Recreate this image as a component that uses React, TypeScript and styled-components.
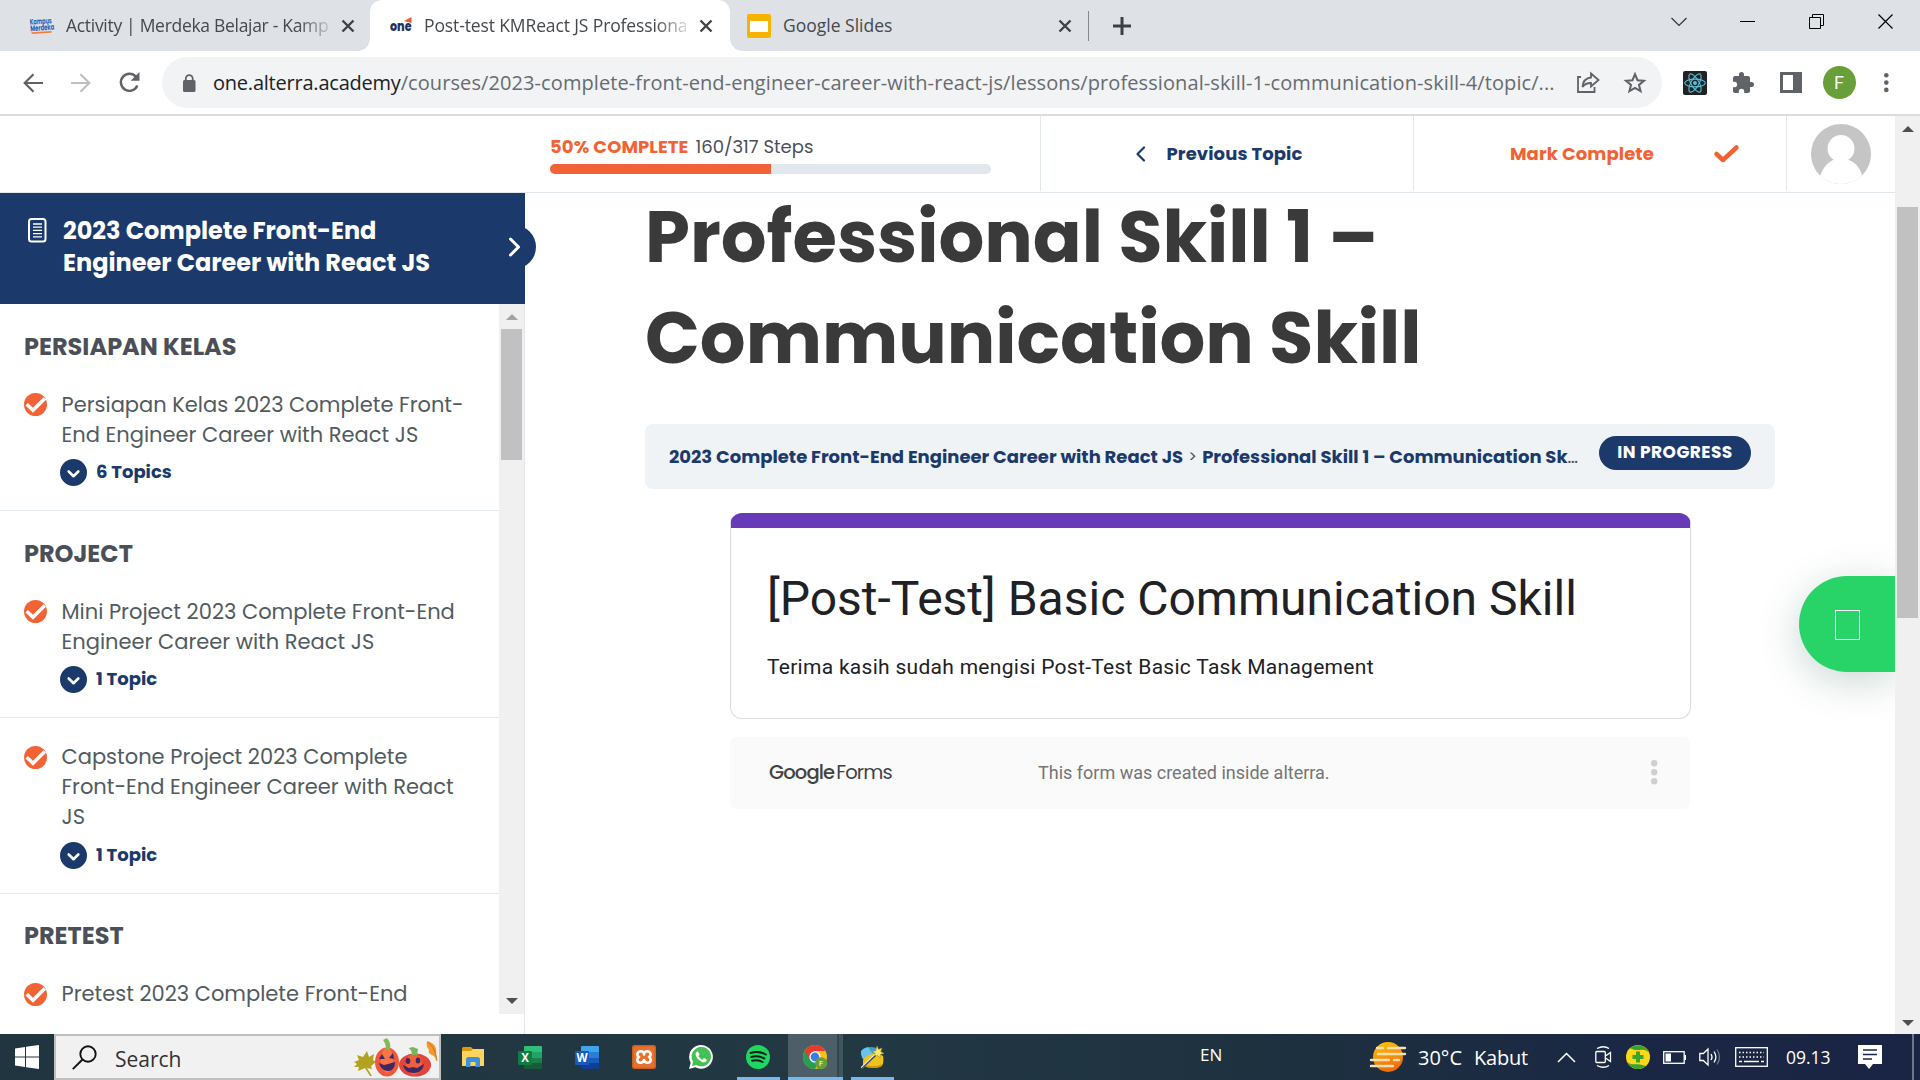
import React from 'react';
import styled, { createGlobalStyle, css } from 'styled-components';

const navy = '#1b3a6b';
const orange = '#f16334';
const line = '#e2e7ed';
const brandFont = `Poppins, Inter, "Open Sans", sans-serif`;
const systemFont = `"Segoe UI", "Open Sans", "Noto Sans", sans-serif`;
const formFont = `Roboto, Arial, sans-serif`;

const GlobalStyle = createGlobalStyle`
  * { box-sizing: border-box; }
  html, body { margin: 0; padding: 0; overflow: hidden; }
  svg { display: block; flex: none; overflow: visible; }
`;

const Screen = styled.div`
  width: 1920px;
  height: 1080px;
  display: flex;
  flex-direction: column;
  overflow: hidden;
  background: #fff;
  font-family: ${brandFont};
  white-space: nowrap;
`;

/* ---------- browser tabs ---------- */
const TabStrip = styled.header`
  height: 51px;
  flex: none;
  display: flex;
  background: #dee1e6;
  font-family: ${systemFont};
  font-size: 17.5px;
  color: #45494d;
`;

const Tab = styled.div<{ $width: number; $padLeft: number; $padRight: number; $active?: boolean }>`
  width: ${p => p.$width}px;
  padding: 0 ${p => p.$padRight}px 0 ${p => p.$padLeft}px;
  display: flex;
  align-items: center;
  ${p => p.$active && css`
    position: relative;
    background: #fff;
    border-radius: 12px 12px 0 0;
    &::before, &::after {
      content: '';
      position: absolute;
      bottom: 0;
      width: 12px;
      height: 12px;
    }
    &::before { left: -12px; background: radial-gradient(circle at 0 0, #dee1e6 11.5px, #fff 12px); }
    &::after { right: -12px; background: radial-gradient(circle at 100% 0, #dee1e6 11.5px, #fff 12px); }
  `}
`;

const TabTitle = styled.span<{ $gap: number; $track: number; $fade?: boolean }>`
  flex: 1;
  min-width: 0;
  margin: 0 11px 0 ${p => p.$gap}px;
  letter-spacing: ${p => p.$track}px;
  line-height: 51px;
  ${p => p.$fade && css`mask-image: linear-gradient(90deg, #000 88%, rgba(0, 0, 0, 0.15) 100%);`}
`;

const TabDivider = styled.i`
  width: 1px;
  height: 30px;
  margin-top: 11px;
  background: #85888c;
`;

const NewTab = styled.div`
  width: 66px;
  display: flex;
  justify-content: center;
  align-items: center;
`;

const WindowButtons = styled.div`
  margin-left: auto;
  display: flex;
  height: 43px;
  align-items: center;
`;

const WindowButton = styled.div`
  width: 69px;
  display: flex;
  justify-content: center;
`;

/* ---------- address row ---------- */
const Toolbar = styled.div`
  height: 65px;
  flex: none;
  display: flex;
  align-items: center;
  padding: 0 0 0 9px;
  border-bottom: 2px solid #dadce0;
`;

const ToolButton = styled.div<{ $width: number }>`
  width: ${p => p.$width}px;
  flex: none;
  display: flex;
  justify-content: center;
`;

const AddressBar = styled.div`
  width: 1500px;
  height: 51px;
  margin: 0 20px 0 9px;
  flex: none;
  display: flex;
  align-items: center;
  padding-left: 21px;
  border-radius: 26px;
  background: #f1f3f4;
`;

const Url = styled.div`
  width: 1351px;
  margin-left: 17px;
  font: 20px/51px ${systemFont};
  letter-spacing: 0.09px;
  color: #676b70;
`;

const UrlHost = styled.span`
  color: #202124;
  letter-spacing: -0.22px;
`;

const ProfileBadge = styled.div`
  width: 33px;
  height: 33px;
  border-radius: 50%;
  background: #689f38;
  color: #fff;
  font: 18px/33px ${formFont};
  text-align: center;
`;

/* ---------- page ---------- */
const Viewport = styled.div`
  height: 918px;
  flex: none;
  display: flex;
`;

const Page = styled.div`
  width: 1895px;
  display: flex;
  flex-direction: column;
  overflow: hidden;
  position: relative;
`;

const CourseHeader = styled.div`
  height: 77px;
  flex: none;
  display: flex;
  padding: 0 0 1px 525px;
  border-bottom: 1px solid ${line};
  background: #fff;
  position: relative;
  z-index: 1;
`;

const HeaderCell = styled.div<{ $width: number; $left?: number; $border?: boolean }>`
  width: ${p => p.$width}px;
  padding-left: ${p => p.$left || 0}px;
  display: flex;
  align-items: center;
  border-left: ${p => (p.$border ? `1px solid ${line}` : '0')};
`;

const Progress = styled.div`
  width: 441px;
`;

const ProgressText = styled.div`
  display: flex;
  gap: 7px;
  line-height: 28px;
  font-size: 18px;
  color: #4a4f57;
`;

const ProgressPercent = styled.b`
  font-weight: 700;
  letter-spacing: 0.1px;
  color: ${orange};
`;

const ProgressTrack = styled.div`
  height: 10px;
  margin-top: 3px;
  border-radius: 5px;
  overflow: hidden;
  background: #e2e7ed;
`;

const ProgressFill = styled.div`
  width: 50%;
  height: 100%;
  background: ${orange};
`;

const HeaderLink = styled.span<{ $tone: string; $left?: number; $right?: number }>`
  margin: 0 ${p => p.$right || 0}px 0 ${p => p.$left || 0}px;
  font-size: 18px;
  font-weight: 700;
  letter-spacing: 0.1px;
  color: ${p => p.$tone};
`;

const Body = styled.div`
  flex: 1;
  min-height: 0;
  display: flex;
`;

/* ---------- course sidebar ---------- */
const Sidebar = styled.aside`
  width: 525px;
  flex: none;
  border-right: 1px solid ${line};
`;

const CourseTitleBox = styled.div`
  width: 525px;
  height: 111px;
  padding: 22px 0 0 28px;
  display: flex;
  gap: 16px;
  background: ${navy};
  position: relative;
`;

const CourseTitle = styled.h3`
  margin: 0;
  font-size: 24px;
  line-height: 32px;
  font-weight: 700;
  color: #fff;
`;

const CourseIcon = styled.div`
  padding-top: 3px;
`;

const CollapseKnob = styled.div`
  position: absolute;
  right: -11px;
  top: 32px;
  width: 44px;
  height: 44px;
  border-radius: 50%;
  display: flex;
  align-items: center;
  justify-content: center;
  background: ${navy};
`;

const Outline = styled.div`
  display: flex;
  height: 710px;
  overflow: hidden;
`;

const OutlineList = styled.div`
  width: 499px;
`;

const OutlineHeading = styled.h4`
  margin: 0;
  padding: 27.5px 0 0 24px;
  font-size: 24px;
  line-height: 30px;
  font-weight: 700;
  color: #4b4f57;
`;

const Lesson = styled.div<{ $top: number; $last?: boolean }>`
  padding: ${p => p.$top}px 0 ${p => (p.$last ? 0 : 24)}px 24px;
  border-bottom: ${p => (p.$last ? '0' : `1px solid ${line}`)};
  display: flex;
  gap: 14.5px;
`;

const LessonMark = styled.div`
  padding-top: 3.5px;
`;

const LessonText = styled.div`
  font-size: 21px;
  line-height: 30px;
  color: #515b5f;
  font-weight: 400;
`;

const Topics = styled.div`
  display: flex;
  align-items: center;
  gap: 9px;
  height: 27px;
  margin: 9.5px 0 0 -1.5px;
  font-size: 18px;
  font-weight: 700;
  color: ${navy};
`;

const TopicsLabel = styled.span`
  padding-bottom: 1px;
`;

const ScrollTrack = styled.div`
  width: 25px;
  flex: none;
  display: flex;
  flex-direction: column;
  align-items: center;
  background: #f0f0f0;
`;

const ScrollArrow = styled.i<{ $down?: boolean; $muted?: boolean; $gap: number }>`
  width: 0;
  height: 0;
  border: 6px solid transparent;
  ${p => {
    const c = p.$muted ? '#a3a3a3' : '#505050';
    return p.$down
      ? css`border-top-color: ${c}; border-bottom-width: 0; margin: auto 0 ${p.$gap}px;`
      : css`border-bottom-color: ${c}; border-top-width: 0; margin: ${p.$gap}px 0 0;`;
  }}
`;

const ScrollThumb = styled.i<{ $gap: number; $height: number }>`
  width: 21px;
  height: ${p => p.$height}px;
  margin: ${p => p.$gap}px 1px 0 0;
  background: #c1c1c1;
`;

/* ---------- lesson content ---------- */
const Content = styled.main`
  width: 1130px;
  margin: -7px 0 0 120px;
`;

const LessonTitle = styled.h1`
  margin: 0;
  font-size: 72px;
  line-height: 101px;
  font-weight: 700;
  color: #3a3a3a;
`;

const Breadcrumb = styled.nav`
  height: 65px;
  margin-top: 36px;
  padding: 0 24px;
  display: flex;
  align-items: center;
  border-radius: 8px;
  background: #eff3f6;
  font-size: 18px;
  color: #4b4f57;
`;

const Crumb = styled.b`
  font-weight: 700;
  color: ${navy};
`;

const CrumbSeparator = styled.span`
  width: 19px;
  text-align: center;
  font-size: 16px;
`;

const StatusPill = styled.span`
  width: 152px;
  height: 34px;
  flex: none;
  margin: 0 0 7px auto;
  border-radius: 17px;
  background: ${navy};
  color: #fff;
  font-size: 17px;
  font-weight: 700;
  letter-spacing: 0.45px;
  line-height: 33px;
  text-align: center;
`;

const FormCard = styled.section`
  width: 961px;
  height: 206px;
  margin: 24px 0 0 84.6px;
  border: 1px solid #dadce0;
  border-top: 15px solid #673ab7;
  border-radius: 12px;
  padding: 40px 0 0 36.4px;
  font-family: ${formFont};
  color: #202124;
`;

const FormTitle = styled.h2`
  margin: 0;
  font-size: 48px;
  line-height: 61px;
  font-weight: 400;
`;

const FormText = styled.p`
  margin: 22.5px 0 0;
  font-size: 21px;
  line-height: 30px;
  letter-spacing: 0.29px;
`;

const FormFooter = styled.div`
  width: 960px;
  height: 72px;
  margin: 18px 0 0 85px;
  padding: 0 33px 2px 39px;
  display: flex;
  align-items: center;
  border-radius: 6px;
  background: #fafafa;
  font: 18px ${formFont};
  color: #757575;
`;

const FormsLogo = styled.div`
  width: 269px;
  padding-top: 1px;
  font: 19.5px ${brandFont};
  letter-spacing: -0.85px;
  color: #424242;
`;

const LogoBold = styled.b`
  font-weight: 500;
  margin-right: 2px;
`;

const FooterMenu = styled.div`
  margin-left: auto;
`;

const ChatButton = styled.div`
  position: absolute;
  right: 0;
  top: 460px;
  width: 96px;
  height: 96px;
  border-radius: 48px 0 0 48px;
  background: #28d468;
  box-shadow: 0 9px 40px rgba(7, 74, 57, 0.22);
  display: flex;
  align-items: center;
  justify-content: center;
  padding-top: 2px;
`;

const MissingGlyph = styled.i`
  width: 25px;
  height: 30px;
  border: 1.5px solid #fff;
`;

/* ---------- taskbar ---------- */
const Taskbar = styled.footer`
  height: 46px;
  flex: none;
  display: flex;
  background: linear-gradient(90deg, #20353f 0%, #223843 45%, #1d303f 68%, #1a2744 86%, #1a2444 100%);
  font-family: ${systemFont};
  color: #fff;
`;

const StartButton = styled.div`
  width: 54px;
  display: flex;
  align-items: center;
  justify-content: center;
`;

const SearchBox = styled.div`
  width: 387px;
  border: 2px solid #bfbfbf;
  background: #f1f1f1;
  display: flex;
  align-items: center;
  padding-left: 16px;
`;

const SearchLabel = styled.span`
  margin: 3px 0 0 18px;
  width: 239px;
  font-size: 21px;
  line-height: 38px;
  color: #2f3133;
`;

const AppButton = styled.div<{ $running?: boolean; $focused?: boolean }>`
  width: 57px;
  height: 46px;
  display: flex;
  align-items: center;
  justify-content: center;
  position: relative;
  ${p => p.$focused && css`
    background: linear-gradient(90deg, transparent 1px, #4c5f69 1px, #4c5f69 50px, #32464f 50px, #32464f 52px, #42555f 52px, #42555f 56px, transparent 56px);
  `}
  ${p => p.$running && css`
    &::after {
      content: '';
      position: absolute;
      bottom: 0;
      left: ${p.$focused ? 1 : 7}px;
      right: ${p.$focused ? 1 : 7}px;
      height: 3px;
      background: #76b9ed;
    }
  `}
`;

const AppList = styled.div`
  display: flex;
  padding-left: 3.5px;
`;

const Tray = styled.div`
  margin-left: auto;
  display: flex;
  align-items: center;
`;

const TrayText = styled.span<{ $width: number; $size: number; $track?: number; $lift?: number }>`
  width: ${p => p.$width}px;
  font-size: ${p => p.$size}px;
  letter-spacing: ${p => p.$track || 0}px;
  padding-bottom: ${p => p.$lift || 0}px;
`;

const TrayIcon = styled.div<{ $width: number }>`
  width: ${p => p.$width}px;
  display: flex;
`;

const DesktopEdge = styled.i`
  width: 8px;
  height: 46px;
  border-left: 2px solid #6d7688;
`;

/* ---------- drawings ---------- */
const CloseIcon = () => (
  <svg width="14" height="14" viewBox="0 0 14 14" stroke="#3f4347" strokeWidth="2.4"><path d="M1.500 1.500l11 11M12.500 1.500l-11 11" /></svg>
);

const CheckCircle = () => (
  <svg width="23" height="23" viewBox="0 0 23 23"><circle cx="11.5" cy="11.5" r="11.5" fill={orange} /><path d="M2.700 11.200l6.300 6L20.800 5.500" fill="none" stroke="#fff" strokeWidth="3.6" /></svg>
);

const DownCircle = () => (
  <svg width="27" height="27" viewBox="0 0 27 27"><circle cx="13.5" cy="13.5" r="13.5" fill={navy} /><path d="M8.700 12.500l4.800 4.700 4.800-4.700" fill="none" stroke="#fff" strokeWidth="2.6" strokeLinecap="round" strokeLinejoin="round" /></svg>
);

const Dots = ({ color, r, step }: { color: string; r: number; step: number }) => (
  <svg width={r * 2} height={step * 2 + r * 2} fill={color}>
    <circle cx={r} cy={r} r={r} /><circle cx={r} cy={r + step} r={r} /><circle cx={r} cy={r + step * 2} r={r} />
  </svg>
);

const ReactIcon = () => (
  <svg width="24" height="24" viewBox="0 0 24 24">
    <rect width="24" height="24" rx="2" fill="#222" />
    <g fill="none" stroke="#53c1de" strokeWidth="1.1">
      <ellipse cx="12" cy="12" rx="10.3" ry="3.9" />
      <ellipse cx="12" cy="12" rx="10.3" ry="3.9" transform="rotate(60 12 12)" />
      <ellipse cx="12" cy="12" rx="10.3" ry="3.9" transform="rotate(120 12 12)" />
    </g>
    <circle cx="12" cy="12" r="2" fill="#53c1de" />
  </svg>
);

const Pumpkins = () => (
  <svg width="85" height="40" viewBox="0 0 85 40">
    <path d="M0 25l5-2-2-5 6 2 4-6 2 6 5-3-1 6 3 2-5 4 1 3-5-1 5 8-2 0-5-8-7 3 1-4-5 0 3-3z" fill="#b3a21f" />
    <path d="M73 4c3 1 6 2 8 5 2 4 1 8 1 14-1-3-2-4-4-5-3-1-4-3-3-5-2-2-3-5-2-9z" fill="#f39a2e" /><path d="M74 5c5 5 8 10 9 19" stroke="#cf7018" fill="none" />
    <ellipse cx="33" cy="25" rx="12" ry="14.5" fill="#f0583a" />
    <ellipse cx="33" cy="23" rx="6" ry="12.5" fill="#fb7d4b" opacity=".8" />
    <path d="M32 12c0-4-1-6-3-9l4-2c3 4 4 7 3 11z" fill="#84b956" />
    <path d="M25 22l3-5 3 5zM35 21l4-5 1 6zM25 26l5 2 4-1 7-2c0 6-3 9-7 9-5 0-8-4-9-8z" fill="#402763" />
    <ellipse cx="61" cy="28" rx="16" ry="11.5" fill="#e2453a" />
    <ellipse cx="60" cy="27" rx="8" ry="10.5" fill="#f4673f" opacity=".8" />
    <path d="M58 18c0-3-1-5-3-7l4-1 5 2-1 6z" fill="#7cb35c" />
    <ellipse cx="54" cy="24" rx="2.3" ry="3" fill="#402763" /><ellipse cx="64" cy="23.5" rx="2.3" ry="3" fill="#402763" />
    <path d="M49 28l6 3 4-1 4 1 7-4c-1 6-5 9-10 9-6 0-10-3-11-8z" fill="#402763" />
  </svg>
);

const ExplorerIcon = () => (
  <svg width="22" height="20" viewBox="0 0 22 20"><path d="M0 1.500Q0 0 1.500 0H9l2 2v3H0z" fill="#dd9b09" /><path d="M0 4h9l2-2h11v17H0z" fill="#ffd45c" /><path d="M4 20v-7.500Q4 10 6.500 10h9Q18 10 18 12.500V20h-4.500v-5h-5v5z" fill="#3d92df" /></svg>
);

const OfficeIcon = ({ letter, tones }: { letter: string; tones: string[] }) => (
  <svg width="24" height="23" viewBox="0 0 24 23">
    <path d="M7 0h16q1 0 1 1v5H6V1q0-1 1-1z" fill={tones[0]} />
    <path d="M6 6h18v6H6z" fill={tones[1]} /><path d="M6 12h18v5H6z" fill={tones[2]} />
    <path d="M6 17h18v5q0 1-1 1H7q-1 0-1-1z" fill={tones[3]} />
    <rect y="5" width="14" height="14" rx="1" fill={tones[4]} />
    <text x="7" y="16" textAnchor="middle" fontFamily="Open Sans, sans-serif" fontWeight="700" fontSize="11.5" fill="#fff">{letter}</text>
  </svg>
);

const XamppIcon = () => (
  <svg width="24" height="24" viewBox="0 0 24 24"><rect width="24" height="24" rx="3" fill="#e8702a" /><rect x=".8" y=".8" width="22.4" height="22.4" rx="2.5" fill="none" stroke="#c4571c" />
    <path d="M12 9.500C12 7.500 10.800 6.300 9 6.300 6.800 6.300 5.300 7.800 5.300 9.300c0 1.300.7 2.200 1.700 2.700-1 .6-1.700 1.500-1.700 2.800 0 1.700 1.400 2.900 3.200 2.900 2.300 0 3-1.500 3.500-2.700.5 1.200 1.200 2.700 3.500 2.700 1.800 0 3.200-1.200 3.200-2.900 0-1.300-.7-2.200-1.700-2.800 1-.5 1.700-1.400 1.700-2.700 0-1.500-1.500-3-3.700-3-1.800 0-3 1.200-3 3.200z" fill="none" stroke="#fff" strokeWidth="2.6" strokeLinejoin="round" /></svg>
);

const WhatsAppIcon = () => (
  <svg width="24" height="24" viewBox="0 0 24 24"><path d="M0 24l1.700-6.200A11.900 11.900 0 1 1 6.300 22.300z" fill="#fff" /><path d="M3 21l1-4.400a9.700 9.700 0 1 1 3.300 3.300z" fill="#45c154" />
    <path d="M8.500 6.500c-.6-.2-2 .9-1.900 2.700C7 13 11.500 17.200 15 17.300c1.600 0 2.900-1.200 2.800-2.500 0-.4-2.500-1.700-2.900-1.500-.5.2-1 1.400-1.400 1.400-.7 0-4-2.700-4-3.700 0-.3 1-1 1-1.400s-1.200-3-2-3.100z" fill="#fff" /></svg>
);

const SpotifyIcon = () => (
  <svg width="24" height="24" viewBox="0 0 24 24"><circle cx="12" cy="12" r="12" fill="#1ed760" /><path d="M4.500 8c5-1.500 11-1 15.300 1.500M5.300 12c4.500-1.300 9-.8 13 1.500M6 15.800c3.500-1 7.500-.7 10.700 1.200" fill="none" stroke="#101d18" strokeWidth="2" strokeLinecap="round" /></svg>
);

const ChromeIcon = () => (
  <svg width="25" height="25" viewBox="0 0 25 25">
    <circle cx="12" cy="12" r="12" fill="#fbc116" />
    <path d="M12 12L1.600 6A12 12 0 0 0 12 24l5-9z" fill="#269d4f" />
    <path d="M1.600 6L7 15l5-9h10.400A12 12 0 0 0 1.600 6z" fill="#e33b2e" />
    <circle cx="12" cy="12" r="5.7" fill="#fff" /><circle cx="12" cy="12" r="4.4" fill="#3b7de8" />
    <circle cx="18.2" cy="18.2" r="6" fill="#689f38" /><text x="18.2" y="21" fontSize="7.5" fontFamily="Roboto" textAnchor="middle" fill="#fff">F</text>
  </svg>
);

const WandIcon = () => (
  <svg width="25" height="24" viewBox="0 0 25 24">
    <ellipse cx="11" cy="8" rx="10" ry="6" fill="#3c9fd6" /><path d="M1 7c0 5 2 8 4 8l8-6-5-7C4 3 1 5 1 7z" fill="#69c3ea" />
    <path d="M3 15c4-6 14-9 20-4 1 6 0 10-3 11-6 2-14 1-17-2z" fill="#eec31c" /><path d="M4 19c5 3 13 3 18 0-1 3-4 4-9 4s-8-1-9-4z" fill="#c99809" />
    <path d="M17 1l1.600 3.400L22 3l-1.300 3.600L24 8.500l-3.700.8L20 13l-2.600-2.700L14 12l1.200-3.600L12 6.300l3.700-.4z" fill="#fbe96f" stroke="#a78b1c" strokeWidth=".6" />
    <path d="M1.500 23L15 10" stroke="#e9e9e9" strokeWidth="2.4" /><path d="M2 23.400L15.500 10.500" stroke="#35393b" strokeWidth="1.2" />
  </svg>
);

const WeatherIcon = () => (
  <svg width="36" height="32" viewBox="0 0 36 32">
    <defs><linearGradient id="sun" x1="0" y1="0" x2="0.3" y2="1"><stop offset="0" stopColor="#fdc70c" /><stop offset="1" stopColor="#ee6c0c" /></linearGradient></defs>
    <circle cx="18" cy="16" r="15" fill="url(#sun)" />
    <path d="M7 7h6M18 7h17M8 13h27M1 19h18M24 19h5M1 25h22" stroke="#f7dfae" strokeWidth="2.4" strokeLinecap="round" />
  </svg>
);

const lessons = [
  { heading: 'PERSIAPAN KELAS', lines: ['Persiapan Kelas 2023 Complete Front-', 'End Engineer Career with React JS'], topics: '6 Topics' },
  { heading: 'PROJECT', lines: ['Mini Project 2023 Complete Front-End', 'Engineer Career with React JS'], topics: '1 Topic' },
  { lines: ['Capstone Project 2023 Complete', 'Front-End Engineer Career with React', 'JS'], topics: '1 Topic' },
  { heading: 'PRETEST', lines: ['Pretest 2023 Complete Front-End'] },
];

export default function App() {
  return (
    <Screen>
      <GlobalStyle />
      <TabStrip>
        <Tab $width={370} $padLeft={28} $padRight={15}>
          <svg width="27" height="20" viewBox="0 0 27 20" fontFamily="Poppins, sans-serif" fontWeight="700" fill="#2b62b5">
            <g transform="rotate(-4 13 9)"><text x="2" y="8" fontSize="8" textLength="22" lengthAdjust="spacingAndGlyphs">Kampus</text><text x="2" y="14.500" fontSize="8" textLength="24" lengthAdjust="spacingAndGlyphs">Merdeka</text><path d="M3 16.500h20" stroke="#f0803c" strokeWidth="1.8" /></g>
          </svg>
          <TabTitle $gap={11} $track={-0.3} $fade>Activity | Merdeka Belajar - Kamp</TabTitle>
          <CloseIcon />
        </Tab>
        <Tab $width={360} $padLeft={20} $padRight={17} $active>
          <svg width="22" height="18" viewBox="0 0 22 18">
            <text x="0" y="14" fontFamily="Poppins, sans-serif" fontWeight="800" fontSize="13" textLength="21.5" lengthAdjust="spacingAndGlyphs" fill="#1c3360">one</text>
            <path d="M14 4L21.500 0v6z" fill="#ee5a30" />
          </svg>
          <TabTitle $gap={12} $track={-0.12} $fade>Post-test KMReact JS Professiona</TabTitle>
          <CloseIcon />
        </Tab>
        <Tab $width={358} $padLeft={17} $padRight={16}>
          <svg width="24" height="24"><rect width="24" height="24" rx="2" fill="#f6b400" /><rect x="3" y="7" width="18" height="11" fill="#fff" /></svg>
          <TabTitle $gap={12} $track={0}>Google Slides</TabTitle>
          <CloseIcon />
        </Tab>
        <TabDivider />
        <NewTab><svg width="18" height="18" stroke="#3c4043" strokeWidth="3"><path d="M9 0v18M0 9h18" /></svg></NewTab>
        <WindowButtons>
          <WindowButton><svg width="16" height="10" fill="none" stroke="#333" strokeWidth="1.2"><path d="M.5 1l7.500 7.500L15.500 1" /></svg></WindowButton>
          <WindowButton><svg width="15" height="1"><rect width="15" height="1" /></svg></WindowButton>
          <WindowButton><svg width="15" height="15" fill="none" stroke="#000"><path d="M.5 3.500h11v11H.5zM3.500 3.500v-3h11v11h-3" /></svg></WindowButton>
          <WindowButton><svg width="15" height="15" stroke="#000" strokeWidth="1.2"><path d="M.5 .5l14 14M14.500 .5l-14 14" /></svg></WindowButton>
        </WindowButtons>
      </TabStrip>

      <Toolbar>
        <ToolButton $width={48}><svg width="20" height="20" fill="none" stroke="#5f6368" strokeWidth="2.2"><path d="M20 10H2M10.500 1.200L1.700 10l8.800 8.800" /></svg></ToolButton>
        <ToolButton $width={48}><svg width="20" height="20" fill="none" stroke="#bdc0c3" strokeWidth="2.2"><path d="M0 10h18M9.500 1.200l8.800 8.800-8.800 8.800" /></svg></ToolButton>
        <ToolButton $width={48}><svg width="21" height="21" fill="none" stroke="#5f6368" strokeWidth="2.4"><path d="M18.300 13.500A8.500 8.500 0 1 1 16.800 4.700L18 6" /><path d="M20.500 0v8.800h-8.800z" fill="#5f6368" stroke="none" /></svg></ToolButton>
        <AddressBar>
          <svg width="13" height="18" viewBox="0 0 13 18"><rect y="6" width="12.5" height="12" rx="1.5" fill="#5f6368" /><path d="M2.800 7V4.500a3.400 3.400 0 0 1 6.900 0V7" fill="none" stroke="#5f6368" strokeWidth="1.8" /></svg>
          <Url><UrlHost>one.alterra.academy</UrlHost>/courses/2023-complete-front-end-engineer-career-with-react-js/lessons/professional-skill-1-communication-skill-4/topic/...</Url>
          <ToolButton $width={48}><svg width="23" height="21" viewBox="0 0 23 21" fill="none" stroke="#5f6368" strokeWidth="1.8"><path d="M4 5H1v15h16.500v-5M14 1.500l7.500 6.500-7.500 6.500V11c-4 0-6.500 1-8.500 4 .5-6 3.500-9 8.500-9.500z" /></svg></ToolButton>
          <ToolButton $width={46}><svg width="22" height="21" viewBox="0 0 22 21" fill="none" stroke="#5f6368" strokeWidth="2"><path d="M11 2.200l2.500 6 6.500.5-5 4.200 1.600 6.300L11 15.800l-5.600 3.400L7 12.900 2 8.700l6.500-.5z" /></svg></ToolButton>
        </AddressBar>
        <ToolButton $width={26}><ReactIcon /></ToolButton>
        <ToolButton $width={70}><svg width="24" height="24" viewBox="0 0 24 24" fill="#5f6368"><path d="M20.500 11H19V7c0-1.100-.9-2-2-2h-4V3.500a2.500 2.500 0 0 0-5 0V5H4c-1.100 0-2 .9-2 2v3.800h1.500a2.700 2.700 0 0 1 0 5.400H2V20c0 1.100.9 2 2 2h3.800v-1.500a2.700 2.700 0 0 1 5.400 0V22H17c1.100 0 2-.9 2-2v-4h1.500a2.500 2.500 0 0 0 0-5z" /></svg></ToolButton>
        <ToolButton $width={26}><svg width="22" height="21"><path d="M0 0h22v21H0zM3 3v15h10V3z" fill="#5f6368" fillRule="evenodd" /></svg></ToolButton>
        <ToolButton $width={70}><ProfileBadge>F</ProfileBadge></ToolButton>
        <ToolButton $width={25}><Dots color="#5f6368" r={2.3} step={7.3} /></ToolButton>
      </Toolbar>

      <Viewport>
        <Page>
          <CourseHeader>
            <HeaderCell $width={515} $left={25}>
              <Progress>
                <ProgressText><ProgressPercent>50% COMPLETE</ProgressPercent>160/317 Steps</ProgressText>
                <ProgressTrack><ProgressFill /></ProgressTrack>
              </Progress>
            </HeaderCell>
            <HeaderCell $width={373} $left={94} $border>
              <svg width="11" height="16" fill="none" stroke={navy} strokeWidth="2.2" strokeLinecap="round" strokeLinejoin="round"><path d="M9 1.500L2.500 8 9 14.500" /></svg>
              <HeaderLink $tone={navy} $left={20.5}>Previous Topic</HeaderLink>
            </HeaderCell>
            <HeaderCell $width={373} $left={96} $border>
              <HeaderLink $tone={orange} $right={60}>Mark Complete</HeaderLink>
              <svg width="25" height="18" fill="none" stroke={orange} strokeWidth="4.5" strokeLinecap="round"><path d="M2.500 9l6.500 6L22.500 2.500" strokeLinejoin="round" /></svg>
            </HeaderCell>
            <HeaderCell $width={109} $left={24} $border>
              <svg width="60" height="60" viewBox="0 0 60 60">
                <defs><clipPath id="avatar"><circle cx="30" cy="30" r="30" /></clipPath></defs>
                <g clipPath="url(#avatar)"><rect width="60" height="60" fill="#c5c5c5" /><circle cx="30" cy="24.5" r="13.5" fill="#fff" /><path d="M8 56c3-12 8-17 14-20h16c7 3 12 8 14 20v8H8z" fill="#fff" /></g>
              </svg>
            </HeaderCell>
          </CourseHeader>

          <Body>
            <Sidebar>
              <CourseTitleBox>
                <CourseIcon>
                  <svg width="19" height="25" fill="none" stroke="#fff"><rect x="1" y="1" width="16.5" height="22.5" rx="2.5" strokeWidth="2" /><path d="M5 6h9M5 9.200h9M5 12.400h9M5 15.600h9M5 18.800h9" strokeWidth="1.3" /></svg>
                </CourseIcon>
                <CourseTitle>2023 Complete Front-End<br />Engineer Career with React JS</CourseTitle>
                <CollapseKnob><svg width="13" height="20" fill="none" stroke="#fff" strokeWidth="3" strokeLinecap="round" strokeLinejoin="round"><path d="M2.500 2l8 8-8 8" /></svg></CollapseKnob>
              </CourseTitleBox>
              <Outline>
                <OutlineList>
                  {lessons.map(item => (
                    <React.Fragment key={item.lines[0]}>
                      {item.heading && <OutlineHeading>{item.heading}</OutlineHeading>}
                      <Lesson $top={item.heading ? 28 : 24} $last={!item.topics}>
                        <LessonMark><CheckCircle /></LessonMark>
                        <LessonText>
                          {item.lines.map(text => <div key={text}>{text}</div>)}
                          {item.topics && <Topics><DownCircle /><TopicsLabel>{item.topics}</TopicsLabel></Topics>}
                        </LessonText>
                      </Lesson>
                    </React.Fragment>
                  ))}
                </OutlineList>
                <ScrollTrack>
                  <ScrollArrow $gap={10} $muted />
                  <ScrollThumb $gap={9} $height={131} />
                  <ScrollArrow $gap={10} $down />
                </ScrollTrack>
              </Outline>
            </Sidebar>

            <Content>
              <LessonTitle>Professional Skill 1 –<br />Communication Skill</LessonTitle>
              <Breadcrumb>
                <Crumb>2023 Complete Front-End Engineer Career with React JS</Crumb>
                <CrumbSeparator>&gt;</CrumbSeparator>
                <Crumb>Professional Skill 1 – Communication Sk</Crumb>
                <span>…</span>
                <StatusPill>IN PROGRESS</StatusPill>
              </Breadcrumb>
              <FormCard>
                <FormTitle>[Post-Test] Basic Communication Skill</FormTitle>
                <FormText>Terima kasih sudah mengisi Post-Test Basic Task Management</FormText>
              </FormCard>
              <FormFooter>
                <FormsLogo><LogoBold>Google</LogoBold>Forms</FormsLogo>
                This form was created inside alterra.
                <FooterMenu><Dots color="#cfcfcf" r={3.2} step={9} /></FooterMenu>
              </FormFooter>
            </Content>
          </Body>
          <ChatButton><MissingGlyph /></ChatButton>
        </Page>
        <ScrollTrack>
          <ScrollArrow $gap={10} />
          <ScrollThumb $gap={75} $height={411} />
          <ScrollArrow $gap={8} $down />
        </ScrollTrack>
      </Viewport>

      <Taskbar>
        <StartButton><svg width="24" height="24" fill="#fff"><path d="M0 3.400l10-1.400v9.500H0zM11 1.800L24 0v11.500H11zM0 12.500h10V22L0 20.600zM11 12.500h13V24l-13-1.800z" /></svg></StartButton>
        <SearchBox>
          <svg width="25" height="25" fill="none" stroke="#111" strokeWidth="1.9"><circle cx="16" cy="9" r="7.7" /><path d="M10.500 14.500L.8 24.200" /></svg>
          <SearchLabel>Search</SearchLabel>
          <Pumpkins />
        </SearchBox>
        <AppList>
          <AppButton><ExplorerIcon /></AppButton>
          <AppButton><OfficeIcon letter="X" tones={['#2fbf79', '#21a366', '#1b7f48', '#185c37', '#107c41']} /></AppButton>
          <AppButton><OfficeIcon letter="W" tones={['#41a5ee', '#2b7cd3', '#185abd', '#103f91', '#185abd']} /></AppButton>
          <AppButton><XamppIcon /></AppButton>
          <AppButton><WhatsAppIcon /></AppButton>
          <AppButton $running><SpotifyIcon /></AppButton>
          <AppButton $running $focused><ChromeIcon /></AppButton>
          <AppButton $running><WandIcon /></AppButton>
        </AppList>
        <Tray>
          <TrayText $width={170} $size={17} $lift={5}>EN</TrayText>
          <TrayIcon $width={48}><WeatherIcon /></TrayIcon>
          <TrayText $width={56} $size={20}>30°C</TrayText>
          <TrayText $width={83} $size={20} $track={-0.2}>Kabut</TrayText>
          <TrayIcon $width={38}><svg width="19" height="11" fill="none" stroke="#fff" strokeWidth="1.5"><path d="M1 10l8.500-8.500L18 10" /></svg></TrayIcon>
          <TrayIcon $width={31}><svg width="17" height="22" fill="none" stroke="#fff" strokeWidth="1.3"><rect x=".8" y="5.5" width="9.5" height="11" rx="1" /><path d="M10.500 10l5-3.500v9l-5-3.500M2 2.500q6.500-3.500 12 0M2 19.500q6.500 3.500 12 0" /></svg></TrayIcon>
          <TrayIcon $width={37}><svg width="24" height="24"><circle cx="12" cy="12" r="12" fill="#fbd916" /><path d="M4 3.200A12 12 0 0 1 23 7.500c-4-4-9-2.500-11-2.500-3 0-5-.5-8-1.800zM1 16.500A12 12 0 0 0 20 21c-3-.5-5-1.500-8-1.800-4-.2-8 1-11-2.700z" fill="#38a235" /><path d="M10 6.500h4V10h3.500v4H14v3.500h-4V14H6.500v-4H10z" fill="#3ba32e" /></svg></TrayIcon>
          <TrayIcon $width={36}><svg width="23" height="13"><rect x=".7" y=".7" width="20.5" height="11.6" fill="none" stroke="#fff" strokeWidth="1.3" /><rect x="2.5" y="2.5" width="5.5" height="8" fill="#fff" /><rect x="21.5" y="4" width="1.5" height="5" fill="#fff" /></svg></TrayIcon>
          <TrayIcon $width={36}><svg width="23" height="18" fill="none" stroke="#fff" strokeWidth="1.3"><path d="M.8 5.500h3.500L9 1v16l-4.700-4.500H.8zM12 6q2 3 0 6M15 3.500q3.800 5.500 0 11" /><path d="M18 1.500q5 7.500 0 15" stroke="#6b768d" /></svg></TrayIcon>
          <TrayIcon $width={51}><svg width="33" height="20" fill="none" stroke="#fff" strokeWidth="1.3"><rect x=".7" y=".7" width="31.6" height="18.6" /><path d="M4 5.500h25M4 10h25" strokeDasharray="1.5 2" /><path d="M4 14.500h3M9 14.500h15M26 14.500h3" /></svg></TrayIcon>
          <TrayText $width={72} $size={17.5}>09.13</TrayText>
          <TrayIcon $width={54}><svg width="24" height="24"><path d="M0 0h24v19H15l-4 5-4-5H0z" fill="#fff" /><path d="M5 5h14M5 9.500h14M5 14h9" stroke="#1a2744" strokeWidth="1.6" /></svg></TrayIcon>
          <DesktopEdge />
        </Tray>
      </Taskbar>
    </Screen>
  );
}
